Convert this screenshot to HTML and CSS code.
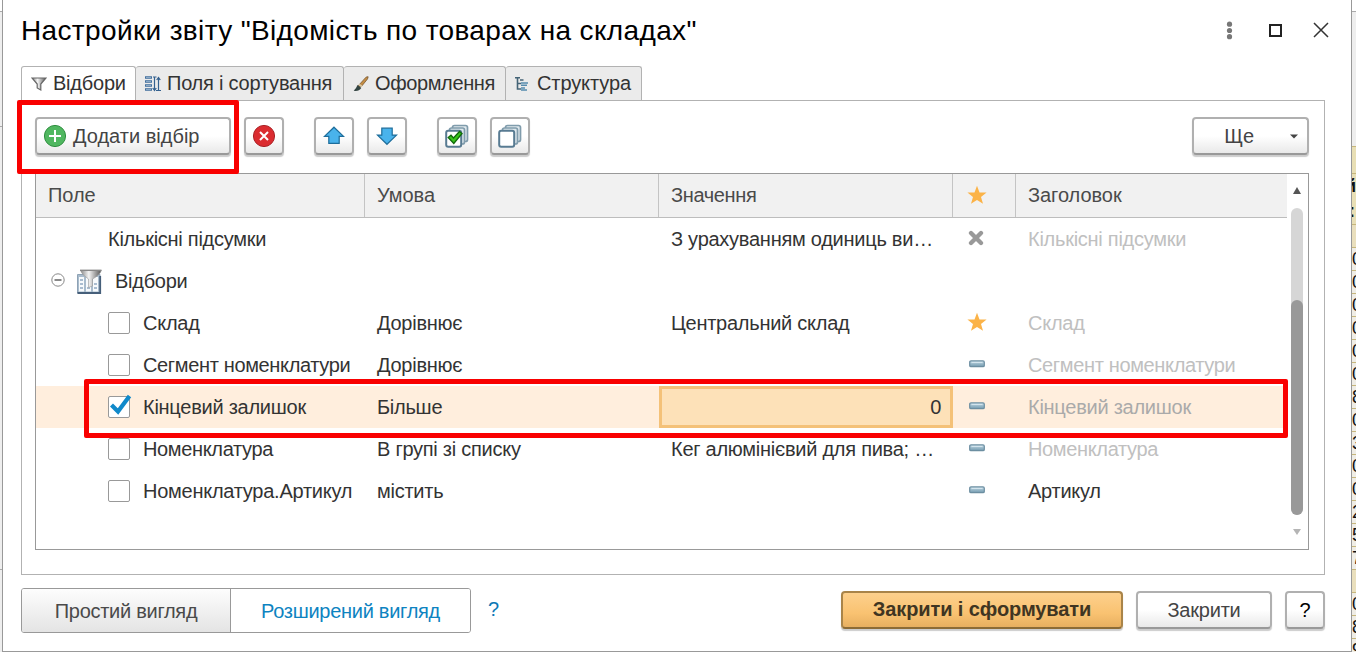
FILE: index.html
```html
<!DOCTYPE html>
<html lang="uk">
<head>
<meta charset="utf-8">
<title>Настройки звіту</title>
<link rel="stylesheet" href="styles.css">
</head>
<body>
<svg width="0" height="0" class="defs">
  <defs>
    <linearGradient id="grey" x1="0" x2="1"><stop offset="0" stop-color="#888"/><stop offset=".4" stop-color="#f4f4f4"/><stop offset="1" stop-color="#555"/></linearGradient>
    <linearGradient id="steel" x1="0" x2="0" y1="0" y2="1"><stop offset="0" stop-color="#c4dbe6"/><stop offset="1" stop-color="#7198ad"/></linearGradient>
    <symbol id="star" viewBox="0 0 20 20"><path d="M10 .8 12.5 7.4 19.6 7.6 14 12.1 16 18.8 10 14.9 4 18.8 6 12.1 .4 7.6 7.5 7.4Z" fill="#fbb348"/></symbol>
    <symbol id="dash" viewBox="0 0 16 8"><rect x=".7" y=".9" width="14.6" height="5.8" rx="1.3" fill="url(#steel)" stroke="#6c8ea1" stroke-width="1.2"/><path d="M2.5 2.4H13.5" stroke="#d8e8f0"/></symbol>
    <symbol id="stack" viewBox="0 0 24 24"><g fill="#dfe8ed" stroke="#809cac" stroke-width="1.7"><rect x="7.5" y="1.5" width="15" height="16" rx="2"/><rect x="4.5" y="4" width="15" height="16" rx="2"/><rect x="1.2" y="6.7" width="15" height="16" rx="2" fill="#fff" stroke="#587b92" stroke-width="2"/></g></symbol>
  </defs>
</svg>
<div class="screen">
  <div class="back-left"><i></i><i></i><i></i></div>
  <main class="dialog">
    <header class="titlebar">
      <h1>Настройки звіту "Відомість по товарах на складах"</h1>
      <svg class="window-icons" width="108" height="20" viewBox="0 0 108 20"><g fill="#777"><circle cx="4.5" cy="4.2" r="2.6"/><circle cx="4.5" cy="10.5" r="2.6"/><circle cx="4.5" cy="16.7" r="2.6"/></g><path d="M45 5H56V16H45Z" fill="none" stroke="#222" stroke-width="2"/><path d="M89 3 103 17M103 3 89 17" stroke="#333" stroke-width="1.5"/></svg>
    </header>
    <nav class="tabs">
      <div class="tab active t1"><svg width="16" height="16" viewBox="0 0 16 16"><path d="M1 2H15L9.8 8V14L6.2 12V8Z" fill="url(#grey)" stroke="#666" stroke-width="1.2"/></svg><span>Відбори</span></div>
      <div class="tab t2"><svg width="17" height="16" viewBox="0 0 17 16"><path d="M1 1.5H8M1 5.5H8M1 9.5H8M1 13.5H8" stroke="#426f9d" stroke-width="2.4"/><path d="M2 1.5H7M2 5.5H7M2 9.5H7M2 13.5H7" stroke="#a9c3da" stroke-width=".7"/><path d="M10.5 1V14M8.7 12 10.5 14.5 12.3 12M14.5 14V2M12.7 4 14.5 1.5 16.3 4M9 1H12.5M12 14.5H17" fill="none" stroke="#34618f" stroke-width="1.2"/></svg><span>Поля і сортування</span></div>
      <div class="tab t3"><svg width="16" height="16" viewBox="0 0 16 16"><path d="M5 10 12.8 1.4Q14 .4 15.2 .8L14.5 3 8 11Z" fill="#c58e45" stroke="#6b4a25" stroke-width=".7"/><path d="M4.5 9 8.3 12Q6 15.6 .7 14.8Q3 13 4.5 9Z" fill="#334442"/><path d="M6 8.5 9 10.5" stroke="#d8c9a8" stroke-width="1.8"/></svg><span>Оформлення</span></div>
      <div class="tab t4"><svg width="15" height="16" viewBox="0 0 15 16"><path d="M0 1.8H5M2.5 2V13H6M2.5 7.5H6M5 4H8.5" fill="none" stroke="#456477" stroke-width="1.6"/><path d="M6 7H13M6 9.2H12M6 12H10M6 14H12" stroke="#568cae" stroke-width="1.5"/></svg><span>Структура</span></div>
    </nav>
    <section class="panel">
      <div class="toolbar">
        <button class="btn add"><svg width="24" height="24" viewBox="0 0 24 24"><circle cx="12" cy="12" r="10.6" fill="#50b760" stroke="#2f8f40"/><path d="M12 6V18M6 12H18" stroke="#fff" stroke-width="2"/></svg><span>Додати відбір</span></button>
        <button class="btn square del"><svg width="24" height="24" viewBox="0 0 24 24"><circle cx="12" cy="12" r="10.6" fill="#db2c30" stroke="#a92428"/><path d="M8 8 16 16M16 8 8 16" stroke="#fff" stroke-width="2"/></svg></button>
        <button class="btn square up"><svg width="22" height="20" viewBox="0 0 22 20"><path d="M11 1.2 20.5 10.4H16.2V17.3H5.8V10.4H1.5Z" fill="#49b3ec" stroke="#1d6d9b" stroke-width="1.2"/></svg></button>
        <button class="btn square down"><svg width="22" height="20" viewBox="0 0 22 20"><path d="M11 18.3 20.5 9.1H16.2V2.2H5.8V9.1H1.5Z" fill="#49b3ec" stroke="#1d6d9b" stroke-width="1.2"/></svg></button>
        <button class="btn square check"><svg width="24" height="24"><use href="#stack"/><path d="M3.2 13.5 6 11.2 8.5 14 14.5 7.5 17 9.5 8.8 19.5Z" fill="#39c51b" stroke="#11690c" stroke-width="1.3"/></svg></button>
        <button class="btn square uncheck"><svg width="24" height="24"><use href="#stack"/></svg></button>
        <button class="btn more"><span>Ще</span><svg width="8" height="5" viewBox="0 0 8 5"><path d="M0 .5H8L4 4.5Z" fill="#444"/></svg></button>
      </div>
      <div class="table">
        <div class="grid">
          <div class="row head"><div>Поле</div><div>Умова</div><div class="tight">Значення</div><div class="mark"><svg width="20" height="20"><use href="#star"/></svg></div><div>Заголовок</div></div>
          <div class="row"><div class="plain">Кількісні підсумки</div><div></div><div>З урахуванням одиниць ви…</div><div class="mark"><svg class="cross" width="16" height="16" viewBox="0 0 16 16"><path d="M3 3 13 13M13 3 3 13" stroke="#999" stroke-width="4.3" stroke-linecap="round"/></svg></div><div class="muted">Кількісні підсумки</div></div>
          <div class="row"><div class="group"><svg class="minus" width="14" height="14" viewBox="0 0 14 14"><circle cx="7" cy="7" r="6.2" fill="#fff" stroke="#888"/><path d="M3.5 7H10.5" stroke="#555" stroke-width="1.4"/></svg><svg class="filter" width="25" height="25" viewBox="0 0 25 25"><path d="M.5 5.5H23V24H.5Z" fill="#a9bccd" stroke="#8ea2b5"/><path d="M.5 24H23.2V7" fill="none" stroke="#465f7a" stroke-width="1.8"/><path d="M2 8H7V22.5H2ZM9 8H14V22.5H9ZM16 8H21V22.5H16Z" fill="#f7fafc"/><path d="M3 11H6M3 15H6M3 19H6M10 19H13M17 15H20M17 19H20" stroke="#91a9c1" stroke-width="1.4"/><path d="M3.5 1.5H24.3Q23 6 15.5 10V17L11.5 18.5V10Q5 6 3.5 1.5Z" fill="url(#grey)" stroke="#999" stroke-width=".6"/><path d="M3 1.3H24.5" stroke="#888" stroke-width="1.4"/></svg><span>Відбори</span></div><div></div><div></div><div></div><div></div></div>
          <div class="row"><div class="item"><i class="box"></i><span>Склад</span></div><div>Дорівнює</div><div>Центральний склад</div><div class="mark"><svg width="20" height="20"><use href="#star"/></svg></div><div class="muted">Склад</div></div>
          <div class="row"><div class="item tight"><i class="box"></i><span>Сегмент номенклатури</span></div><div>Дорівнює</div><div></div><div class="mark"><svg width="16" height="8"><use href="#dash"/></svg></div><div class="muted tight">Сегмент номенклатури</div></div>
          <div class="row selected"><div class="item"><i class="box"><svg width="26" height="26" viewBox="0 0 26 26"><path d="M3.5 11 10 17.5 21.5 2" fill="none" stroke="#1089ca" stroke-width="4.2"/></svg></i><span>Кінцевий залишок</span></div><div>Більше</div><div class="value">0</div><div class="mark"><svg width="16" height="8"><use href="#dash"/></svg></div><div class="muted">Кінцевий залишок</div></div>
          <div class="row"><div class="item tight"><i class="box"></i><span>Номенклатура</span></div><div>В групі зі списку</div><div>Кег алюмінієвий для пива; …</div><div class="mark"><svg width="16" height="8"><use href="#dash"/></svg></div><div class="muted tight">Номенклатура</div></div>
          <div class="row"><div class="item"><i class="box"></i><span>Номенклатура.Артикул</span></div><div>містить</div><div></div><div class="mark"><svg width="16" height="8"><use href="#dash"/></svg></div><div>Артикул</div></div>
        </div>
        <div class="scroll"><svg width="8" height="7" viewBox="0 0 8 7"><path d="M4 0 8 7H0Z" fill="#555"/></svg><div class="track"><div class="thumb"></div></div><svg width="8" height="6" viewBox="0 0 8 6"><path d="M0 0H8L4 6Z" fill="#b5b5b5"/></svg></div>
      </div>
    </section>
    <footer>
      <div class="views"><div>Простий вигляд</div><div>Розширений вигляд</div></div>
      <a class="help">?</a>
      <button class="btn primary">Закрити і сформувати</button>
      <button class="btn close">Закрити</button>
      <button class="btn question">?</button>
    </footer>
  </main>
  <aside class="back-right"><div class="white"></div><div class="blank"></div><div class="band"></div><div class="caption"><span>й</span><span>:</span></div><div class="cell sum"></div><div class="cell">0</div><div class="cell">0</div><div class="cell">0</div><div class="cell">0</div><div class="cell">0</div><div class="cell">0</div><div class="cell">8</div><div class="cell">0</div><div class="cell">3</div><div class="cell">0</div><div class="cell">0</div><div class="cell">2</div><div class="cell">5</div><div class="cell">7</div><div class="cell sum"></div><div class="cell">0</div><div class="cell">8</div><div class="cell">9</div></aside>
  <div class="highlight first"></div>
  <div class="highlight second"></div>
</div>
</body>
</html>
```
FILE: styles.css
```css
* { box-sizing: border-box; }
body { margin: 0; overflow: hidden; font-family: "Liberation Sans", Arial, sans-serif; font-size: 20px; color: #333; }
.defs { position: absolute; }
svg { display: block; flex: none; }
.screen { position: relative; display: flex; width: 1356px; height: 652px; overflow: hidden; background: #fff; }
.back-left { width: 2px; flex: none; background: #eee; }
.back-left i { display: block; border-bottom: 1px solid #aaa; }
.back-left i:nth-child(1) { height: 12px; background: #fff; }
.back-left i:nth-child(2) { height: 115px; }
.back-left i:nth-child(3) { height: 443px; }
.dialog { width: 1350px; height: 652px; flex: none; display: flex; flex-direction: column; background: #fff; border-left: 1px solid #999; border-right: 1px solid #999; border-bottom: 1px solid #999; padding: 0 26px 0 18px; }
.titlebar { height: 66px; display: flex; justify-content: space-between; padding-top: 14px; flex: none; }
h1 { margin: 0; font-size: 28px; letter-spacing: .36px; font-weight: 400; line-height: 34px; color: #000; white-space: nowrap; }
.window-icons { margin: 6px -8px 0 0; }
.tabs { display: flex; height: 34px; flex: none; }
.tab { display: flex; align-items: center; gap: 6px; padding-left: 9px; height: 34px; border: 1px solid #b2b2b2; border-left: 0; border-bottom: 0; border-radius: 3px 3px 0 0; background: #ebebeb; white-space: nowrap; letter-spacing: -.22px; }
.t1 { width: 115px; border-left: 1px solid #b2b2b2; }
.tab.active { height: 35px; background: #fff; z-index: 1; padding-bottom: 1px; }
.t2 { width: 208px; padding-left: 8px; }
.t3 { width: 162px; letter-spacing: -.38px; }
.t4 { width: 136px; gap: 7px; letter-spacing: -.1px; }
.panel { width: 1304px; height: 475px; flex: none; border: 1px solid #b2b2b2; padding: 16px 15px 0 13px; }
.toolbar { display: flex; height: 56px; }
.btn { font: inherit; color: #444; height: 38px; border: 2px solid #b0b0b0; border-bottom-color: #999; border-radius: 4px; background: linear-gradient(#fff 50%, #e9e9e9); box-shadow: 0 2px 1px #ccc; padding: 0; display: flex; align-items: center; justify-content: center; flex: none; white-space: nowrap; }
.square { width: 40px; }
.add { width: 196px; justify-content: flex-start; padding-left: 6px; gap: 6px; }
.del { margin-left: 13px; }
.up, .check { margin-left: 30px; }
.down, .uncheck { margin-left: 13px; }
.more { width: 117px; margin-left: auto; justify-content: flex-end; padding-right: 9px; gap: 36px; }
.table { width: 1274px; height: 377px; border: 1px solid #999; display: flex; }
.grid { width: 1251px; }
.row { display: grid; grid-template-columns: 329px 294px 294px 63px 271px; height: 42px; letter-spacing: -.26px; }
.row > div { display: flex; align-items: center; padding-left: 12px; white-space: nowrap; min-width: 0; }
.row > .tight { letter-spacing: -.35px; }
.row.head { height: 44px; color: #4a4a4a; border-bottom: 1px solid #bdbdbd; background: #f1f1f1; letter-spacing: -.05px; }
.head > div { border-right: 1px solid #c4c4c4; }
.head > div:last-child { border-right: 0; }
.row > .plain { padding-left: 72px; }
.row > .group { padding-left: 15px; }
.minus { margin-bottom: 2px; }
.filter { margin-left: 12px; }
.group span { margin-left: 13px; }
.row > .item { padding-left: 72px; gap: 13px; }
.box { display: block; width: 22px; height: 22px; border: 1px solid #999; border-radius: 2px; background: #fff; flex: none; }
.box svg { margin: -3px 0 0 -1px; }
.row > .mark { padding-left: 14px; padding-bottom: 3px; }
.row.head > .mark { padding-bottom: 2px; }
.mark svg[width="16"] { margin-left: 2px; }
.row > .mark .cross { margin-left: 1px; }
.row > .muted { color: #c0c0c0; }
.selected { background: #ffeedd; }
.row > .value { background: #fde1b8; border: 3px solid #f4c178; justify-content: flex-end; padding-right: 9px; }
.selected > .muted { color: #aaa; }
.scroll { width: 20px; display: flex; flex-direction: column; align-items: center; padding-top: 13px; }
.track { width: 12px; height: 307px; margin: 14px 0 14px; padding-top: 92px; border-radius: 6px; background: #d6d6d6; }
.thumb { height: 215px; border-radius: 6px; background: #999; }
footer { display: flex; padding-top: 13px; width: 1304px; }
.views { display: flex; width: 450px; height: 45px; border: 1px solid #999; border-radius: 3px; overflow: hidden; letter-spacing: -.28px; }
.views div { display: flex; align-items: center; justify-content: center; width: 208px; padding-top: 2px; background: linear-gradient(#fdfdfd, #e4e4e4); color: #4a4a4a; }
.views div + div { width: 240px; border-left: 1px solid #999; background: #fff; color: #0d83c1; }
.help { color: #0d78b5; margin: 9px 0 0 17px; line-height: 24px; }
.primary { width: 282px; margin: 3px 0 0 auto; padding-bottom: 2px; color: #403522; font-weight: 700; letter-spacing: -.1px; border-color: #a98449; border-bottom-color: #8c6b36; background: linear-gradient(#fdd08c, #f9c271 60%, #e7af60); }
.close { width: 136px; margin: 3px 0 0 13px; letter-spacing: -.2px; }
.question { width: 40px; margin: 3px 0 0 13px; color: #000; }
.back-right { width: 4px; flex: none; height: 652px; overflow: hidden; background: #eee; }
.back-right > div { overflow: hidden; }
.white { height: 12px; background: #fff; border-bottom: 1px solid #aaa; }
.blank { height: 134px; }
.band { height: 28px; background: #e8dfb5; border-top: 1px solid #c6b67c; border-bottom: 1px solid #c6b67c; }
.caption { height: 50px; background: #e8dfb5; font-weight: 700; font-size: 18px; line-height: 25px; color: #111; }
.caption span { display: block; margin-left: -7px; }
.caption span + span { margin-left: -3px; }
.cell { height: 23px; border-top: 1px solid #c6b67c; background: #efede6; color: #111; font-size: 18px; line-height: 23px; }
.cell.sum { background: #e9dfbd; }
.highlight { position: absolute; border: 5px solid #f90000; border-radius: 2px; z-index: 3; }
.first { left: 17px; top: 100px; width: 222px; height: 74px; }
.second { left: 84px; top: 379px; width: 1204px; height: 59px; }
```
